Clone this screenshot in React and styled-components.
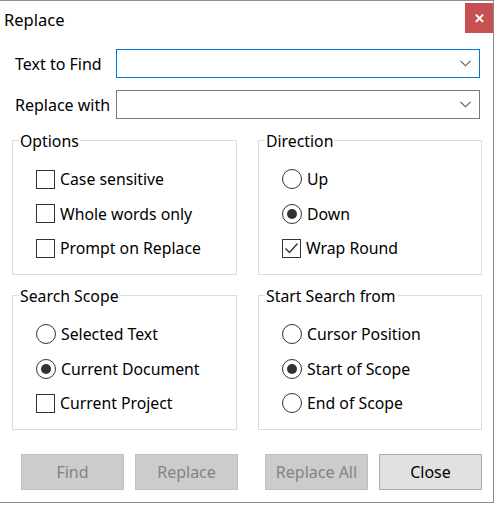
import React from 'react'
import styled, { createGlobalStyle } from 'styled-components'

const GlobalStyle = createGlobalStyle`
  body {
    margin: 0;
    background: #ffffff;
    font-family: "Noto Sans", "Liberation Sans", sans-serif;
    color: #000000;
  }
`

const Chevron = () => (
  <svg width="11" height="7" viewBox="0 0 11 7">
    <polyline points="0.5,0.8 5.5,5.8 10.5,0.8" fill="none" stroke="#555" strokeWidth="1.1" />
  </svg>
)

const Tick = () => (
  <svg width="17" height="17" viewBox="0 0 17 17">
    <polyline points="2.5,8.5 6.5,12.5 14.5,3.5" fill="none" stroke="#333" strokeWidth="1.4" />
  </svg>
)

const Check = ({ label, checked }) => (
  <Item>
    <Box>{checked && <Tick />}</Box>
    <ItemText>{label}</ItemText>
  </Item>
)

const Radio = ({ label, selected }) => (
  <Item>
    <Circle>{selected && <Dot />}</Circle>
    <ItemText>{label}</ItemText>
  </Item>
)

const Group = ({ title, children }) => (
  <GroupBox>
    <GroupTitle>{title}</GroupTitle>
    <Items>{children}</Items>
  </GroupBox>
)

const App = () => {
  return (
    <>
      <GlobalStyle />
      <Window>
        <TitleBar>
          <Title>Replace</Title>
          <CloseX>✕</CloseX>
        </TitleBar>

        <Fields>
          <FieldRow>
            <FieldLabel>Text to Find</FieldLabel>
            <Combo focused>
              <Chevron />
            </Combo>
          </FieldRow>
          <FieldRow>
            <FieldLabel>Replace with</FieldLabel>
            <Combo>
              <Chevron />
            </Combo>
          </FieldRow>
        </Fields>

        <Groups>
          <Group title="Options">
            <Check label="Case sensitive" />
            <Check label="Whole words only" />
            <Check label="Prompt on Replace" />
          </Group>
          <Group title="Direction">
            <Radio label="Up" />
            <Radio label="Down" selected />
            <Check label="Wrap Round" checked />
          </Group>
          <Group title="Search Scope">
            <Radio label="Selected Text" />
            <Radio label="Current Document" selected />
            <Check label="Current Project" />
          </Group>
          <Group title="Start Search from">
            <Radio label="Cursor Position" />
            <Radio label="Start of Scope" selected />
            <Radio label="End of Scope" />
          </Group>
        </Groups>

        <Buttons>
          <Button disabled>Find</Button>
          <Button disabled>Replace</Button>
          <Button disabled>Replace All</Button>
          <Button>Close</Button>
        </Buttons>
      </Window>
    </>
  )
}

export default App

const Window = styled.div`
  width: 494px;
  height: 503px;
  box-sizing: border-box;
  border-top: 1px solid #8c8c8c;
  border-right: 1px solid #8c8c8c;
  border-bottom: 1px solid #8c8c8c;
  background: #ffffff;
  display: flex;
  flex-direction: column;
`

const TitleBar = styled.div`
  display: flex;
  justify-content: space-between;
  align-items: flex-start;
  height: 39px;
`

const Title = styled.div`
  padding: 9px 0 0 4px;
  font-size: 16.5px;
  line-height: 20px;
`

const CloseX = styled.div`
  margin: 2px 0 0 0;
  width: 28px;
  height: 30px;
  background: #c75050;
  color: #ffffff;
  font-size: 13px;
  font-weight: 700;
  display: flex;
  align-items: center;
  justify-content: center;
`

const Fields = styled.div`
  display: flex;
  flex-direction: column;
  gap: 12px;
  margin-top: 9px;
  padding-left: 15px;
`

const FieldRow = styled.div`
  display: flex;
  align-items: center;
  height: 29px;
`

const FieldLabel = styled.div`
  width: 101px;
  font-size: 16px;
  line-height: 18px;
`

const Combo = styled.div`
  width: 364px;
  height: 29px;
  box-sizing: border-box;
  border: 1px solid ${(p) => (p.focused ? '#0078d7' : '#7a7a7a')};
  display: flex;
  align-items: center;
  justify-content: flex-end;
  padding-right: 8px;
`

const Groups = styled.div`
  display: grid;
  grid-template-columns: 225px 224px;
  grid-auto-rows: 135px;
  column-gap: 21px;
  row-gap: 20px;
  margin-top: 21px;
  padding-left: 12px;
`

const GroupBox = styled.div`
  box-sizing: border-box;
  border: 1px solid #dcdcdc;
  display: flex;
  flex-direction: column;
`

const GroupTitle = styled.div`
  margin: -8px 0 0 6px;
  padding: 0 1px;
  width: max-content;
  background: #ffffff;
  font-size: 15.8px;
  line-height: 16px;
`

const Items = styled.div`
  display: flex;
  flex-direction: column;
  gap: 14.5px;
  padding: 20px 0 0 23px;
`

const Item = styled.div`
  display: flex;
  align-items: center;
  height: 20px;
`

const ItemText = styled.span`
  margin-left: 5px;
  font-size: 15.8px;
  line-height: 18px;
`

const Box = styled.div`
  width: 19px;
  height: 19px;
  box-sizing: border-box;
  border: 1px solid #333333;
  display: flex;
  align-items: center;
  justify-content: center;
`

const Circle = styled.div`
  width: 20px;
  height: 20px;
  box-sizing: border-box;
  border: 1px solid #333333;
  border-radius: 50%;
  display: flex;
  align-items: center;
  justify-content: center;
`

const Dot = styled.div`
  width: 10px;
  height: 10px;
  border-radius: 50%;
  background: #333333;
`

const Buttons = styled.div`
  display: flex;
  margin-top: 24px;
  padding-left: 21px;
  gap: 11px;

  & > :nth-child(3) {
    margin-left: 16px;
  }
`

const Button = styled.button`
  width: 103px;
  height: 36px;
  box-sizing: border-box;
  padding: 0 0 1px;
  font-family: inherit;
  font-size: 16px;
  background: ${(p) => (p.disabled ? '#cccccc' : '#e1e1e1')};
  border: 1px solid ${(p) => (p.disabled ? '#bfbfbf' : '#adadad')};
  color: ${(p) => (p.disabled ? '#838383' : '#000000')};
`
